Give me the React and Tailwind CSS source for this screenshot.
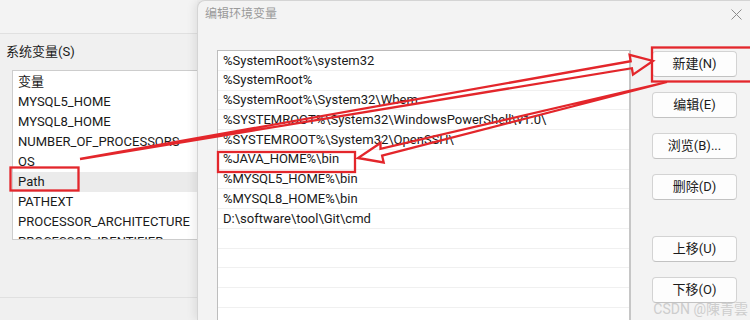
import React from 'react';

const sysVars = [
    'MYSQL5_HOME',
    'MYSQL8_HOME',
    'NUMBER_OF_PROCESSORS',
    'OS',
    'Path',
    'PATHEXT',
    'PROCESSOR_ARCHITECTURE',
    'PROCESSOR_IDENTIFIER',
];

const pathEntries = [
    '%SystemRoot%\\system32',
    '%SystemRoot%',
    '%SystemRoot%\\System32\\Wbem',
    '%SYSTEMROOT%\\System32\\WindowsPowerShell\\v1.0\\',
    '%SYSTEMROOT%\\System32\\OpenSSH\\',
    '%JAVA_HOME%\\bin',
    '%MYSQL5_HOME%\\bin',
    '%MYSQL8_HOME%\\bin',
    'D:\\software\\tool\\Git\\cmd',
    '', '', '', '', '',
];

const DlgButton = ({ label, className = '' }) => (
    <div className={`h-[26px] w-[85px] flex items-center justify-center rounded-[4px] bg-[#fdfdfd] border border-[#d3d3d3] border-b-[#c2c2c2] text-[13px] text-[#1b1b1b] ${className}`}>
        {label}
    </div>
);

const App = () => {
    return (
        <div className="relative w-[750px] h-[320px] overflow-hidden flex bg-[#f0f0f0] font-['Roboto','Noto_Sans_CJK_SC',sans-serif] text-[#1a1a1a]">
            {/* background window: system variables */}
            <div className="w-[197px] shrink-0 flex flex-col">
                <div className="h-[34px] border-b border-[#e0e0e0] bg-[#f3f3f3]" />
                <div className="mt-[8px] h-[20px] pl-[6px] text-[13px] leading-[20px]">系统变量(S)</div>
                <div className="mt-[8px] ml-[12px] h-[170px] bg-white border border-r-0 border-[#cdcdcd] pt-[1px] overflow-hidden text-[13px]">
                    <div className="h-[20px] flex items-center pl-[5px]">变量</div>
                    {sysVars.map((name) => (
                        <div
                            key={name}
                            className={`h-[20px] flex items-center pl-[5px] whitespace-nowrap ${name === 'Path' ? 'bg-[#ebebeb]' : ''}`}
                        >
                            {name}
                        </div>
                    ))}
                </div>
                <div className="flex-1" />
                <div className="h-[23px] border-t border-[#e0e0e0]" />
            </div>

            {/* edit dialog */}
            <div className="flex-1 flex flex-col bg-[#f3f3f3] rounded-tl-[8px] border-l border-t border-[#d4d4d4] shadow-[-3px_0_8px_rgba(0,0,0,0.08)]">
                <div className="h-[26px] shrink-0 flex items-center justify-between pl-[7px] pr-[8px]">
                    <span className="text-[12px] text-[#9a9a9a]">编辑环境变量</span>
                    <svg width="11" height="11" viewBox="0 0 11 11">
                        <path d="M0.5 0.5 L10.5 10.5 M10.5 0.5 L0.5 10.5" stroke="#8c8c8c" strokeWidth="1" />
                    </svg>
                </div>
                <div className="flex mt-[23px] pl-[19px] pr-[13px] gap-[21px]">
                    <div className="w-[414px] h-[280px] shrink-0 bg-white border border-[#bdbdbd] border-r-2 border-r-[#c6c6c6] overflow-hidden text-[13px]">
                        {pathEntries.map((entry, i) => (
                            <div key={i} className="h-[19.75px] flex items-center pl-[5px] border-b border-[#f0f0f0] whitespace-nowrap">
                                {entry}
                            </div>
                        ))}
                    </div>
                    <div className="w-[85px] shrink-0 flex flex-col pt-[1px]">
                        <DlgButton label="新建(N)" />
                        <DlgButton label="编辑(E)" className="mt-[15px]" />
                        <DlgButton label="浏览(B)..." className="mt-[15px]" />
                        <DlgButton label="删除(D)" className="mt-[15px]" />
                        <DlgButton label="上移(U)" className="mt-[36px]" />
                        <DlgButton label="下移(O)" className="mt-[15px]" />
                    </div>
                </div>
            </div>

            {/* red annotations */}
            <svg className="absolute inset-0 pointer-events-none" width="750" height="320" viewBox="0 0 750 320">
                <g fill="none" stroke="#e3262b" strokeWidth="2.3" strokeLinejoin="miter">
                    <rect x="10.5" y="167.5" width="68" height="23" />
                    <rect x="218" y="152" width="137" height="20" />
                    <rect x="652" y="47.5" width="110" height="34" />
                    <polygon points="80,159 630.7,61.2 629.6,54.8 653,61 633,74.6 631.9,68.2" />
                    <polygon points="667,82 380.5,148.9 380.5,143 358,158 383.7,162.5 382.1,155.7" />
                </g>
            </svg>

            <div className="absolute right-[2px] bottom-[4px] text-[14px] leading-[14px] text-[#cdcdcd]">CSDN @陳青雲</div>
        </div>
    );
};

export default App;
